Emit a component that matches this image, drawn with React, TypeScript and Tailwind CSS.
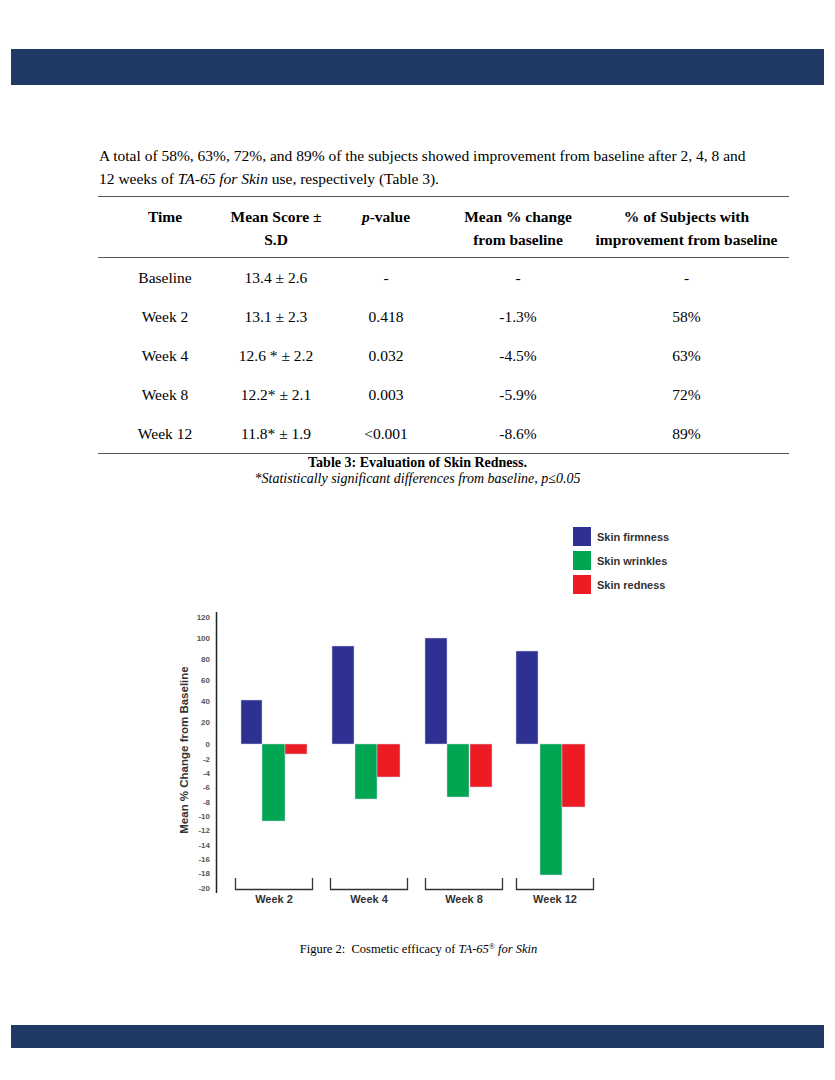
const rows = [
  { time: 'Baseline', score: '13.4 ± 2.6', p: '-', change: '-', pct: '-' },
  { time: 'Week 2', score: '13.1 ± 2.3', p: '0.418', change: '-1.3%', pct: '58%' },
  { time: 'Week 4', score: '12.6 * ± 2.2', p: '0.032', change: '-4.5%', pct: '63%' },
  { time: 'Week 8', score: '12.2* ± 2.1', p: '0.003', change: '-5.9%', pct: '72%' },
  { time: 'Week 12', score: '11.8* ± 1.9', p: '<0.001', change: '-8.6%', pct: '89%' },
];

const cols = 'grid grid-cols-[134px_88px_132px_132px_205px]';
const cell = 'flex justify-center whitespace-nowrap';

const BLUE = '#2e3192';
const GREEN = '#00a651';
const RED = '#ed1c24';
const ZERO = 229;

// pixel-measured bars: [x, width, topOrBottom]
const groups = [
  { label: 'Week 2', bx: 65, bw: 78, bars: [[71, 21, 185], [92, 23, 306], [115, 22, 239]] },
  { label: 'Week 4', bx: 160, bw: 78, bars: [[162, 22, 131], [185, 22, 284], [207, 23, 262]] },
  { label: 'Week 8', bx: 255, bw: 78, bars: [[255, 22, 123], [277, 22, 282], [300, 22, 272]] },
  { label: 'Week 12', bx: 346, bw: 78, bars: [[346, 22, 136], [370, 22, 360], [392, 23, 292]] },
];

const ticks = [
  ['120', 102], ['100', 123], ['80', 144], ['60', 165], ['40', 186], ['20', 207], ['0', 229],
  ['-2', 244], ['-4', 258], ['-6', 272], ['-8', 287], ['-10', 301], ['-12', 315],
  ['-14', 330], ['-16', 344], ['-18', 358], ['-20', 373],
] as const;

function Chart() {
  const colors = [BLUE, GREEN, RED];
  return (
    <svg width="530" height="400" className="block ml-[170px] mt-[28px]" style={{ fontFamily: 'Liberation Sans, Arial, sans-serif' }}>
      {[
        ['Skin firmness', BLUE, 12],
        ['Skin wrinkles', GREEN, 36],
        ['Skin redness', RED, 60],
      ].map(([t, c, y]) => (
        <g key={t as string}>
          <rect x="403" y={y as number} width="18" height="19" fill={c as string} />
          <text x="427" y={(y as number) + 14} fontSize="11" fontWeight="700" fill="#333">
            {t}
          </text>
        </g>
      ))}

      <line x1="46.5" y1="97" x2="46.5" y2="378" stroke="#222" strokeWidth="1.5" />
      {ticks.map(([t, y]) => (
        <text key={t} x="40" y={y + 3} fontSize="8" fontWeight="700" fill="#555" textAnchor="end">
          {t}
        </text>
      ))}
      <text
        x="15"
        y="235"
        fontSize="11.5"
        fontWeight="700"
        fill="#333"
        textAnchor="middle"
        dominantBaseline="middle"
        transform="rotate(-90 15 235)"
      >
        Mean % Change from Baseline
      </text>

      {groups.map((g) => (
        <g key={g.label}>
          {g.bars.map(([x, w, v], i) => {
            const top = i === 0 ? v : ZERO;
            const h = i === 0 ? ZERO - v : v - ZERO;
            return <rect key={i} x={x} y={top} width={w} height={h} fill={colors[i]} stroke="#cfd3e6" strokeWidth="0.5" />;
          })}
          <path
            d={`M${g.bx + 0.5} 363 V374.5 H${g.bx + g.bw - 0.5} V363`}
            fill="none"
            stroke="#333"
            strokeWidth="1.3"
          />
          <text x={g.bx + g.bw / 2} y="388" fontSize="11" fontWeight="700" fill="#333" textAnchor="middle">
            {g.label}
          </text>
        </g>
      ))}
    </svg>
  );
}

export default function App() {
  return (
    <div className="w-[835px] h-[1080px] bg-white text-black font-['Liberation_Serif',_'DejaVu_Serif',_serif] overflow-hidden">
      <div className="h-[49px]" />
      <div className="mx-[11px] h-[36px] bg-[#203864]" />

      <p className="mt-[59px] ml-[99px] text-[15.5px] leading-[23px]">
        A total of 58%, 63%, 72%, and 89% of the subjects showed improvement from baseline after 2, 4, 8 and
        <br />
        12 weeks of <i>TA-65 for Skin</i> use, respectively (Table 3).
      </p>

      <div className="ml-[98px] w-[691px] mt-[6px] border-t-[1.5px] border-b-[1.5px] border-[#555] text-[15.5px]">
        <div className={`${cols} font-bold text-center leading-[23px] pt-[8px] pb-[6px] border-b-[1.5px] border-[#555]`}>
          <div className={cell}>Time</div>
          <div className={cell}>
            <div>
              Mean Score ±<br />
              S.D
            </div>
          </div>
          <div className={cell}>
            <div>
              <i>p</i>-value
            </div>
          </div>
          <div className={cell}>
            <div>
              Mean % change
              <br />
              from baseline
            </div>
          </div>
          <div className={cell}>
            <div>
              % of Subjects with
              <br />
              improvement from baseline
            </div>
          </div>
        </div>
        {rows.map((r) => (
          <div key={r.time} className={`${cols} h-[39px] items-center`}>
            <div className={cell}>{r.time}</div>
            <div className={cell}>{r.score}</div>
            <div className={cell}>{r.p}</div>
            <div className={cell}>{r.change}</div>
            <div className={cell}>{r.pct}</div>
          </div>
        ))}
      </div>

      <div className="text-center mt-[1px]">
        <div className="font-bold text-[14px] leading-[16px]">Table 3: Evaluation of Skin Redness.</div>
        <div className="italic text-[14px] leading-[16px]">*Statistically significant differences from baseline, p≤0.05</div>
      </div>

      <Chart />

      <p className="text-center text-[12.5px] mt-[25px] pl-[2px]">
        Figure 2:&nbsp; Cosmetic efficacy of <i>TA-65</i>
        <sup className="text-[8px]">®</sup> <i>for Skin</i>
      </p>

      <div className="mx-[11px] mt-[66px] h-[23px] bg-[#203864]" />
    </div>
  );
}
